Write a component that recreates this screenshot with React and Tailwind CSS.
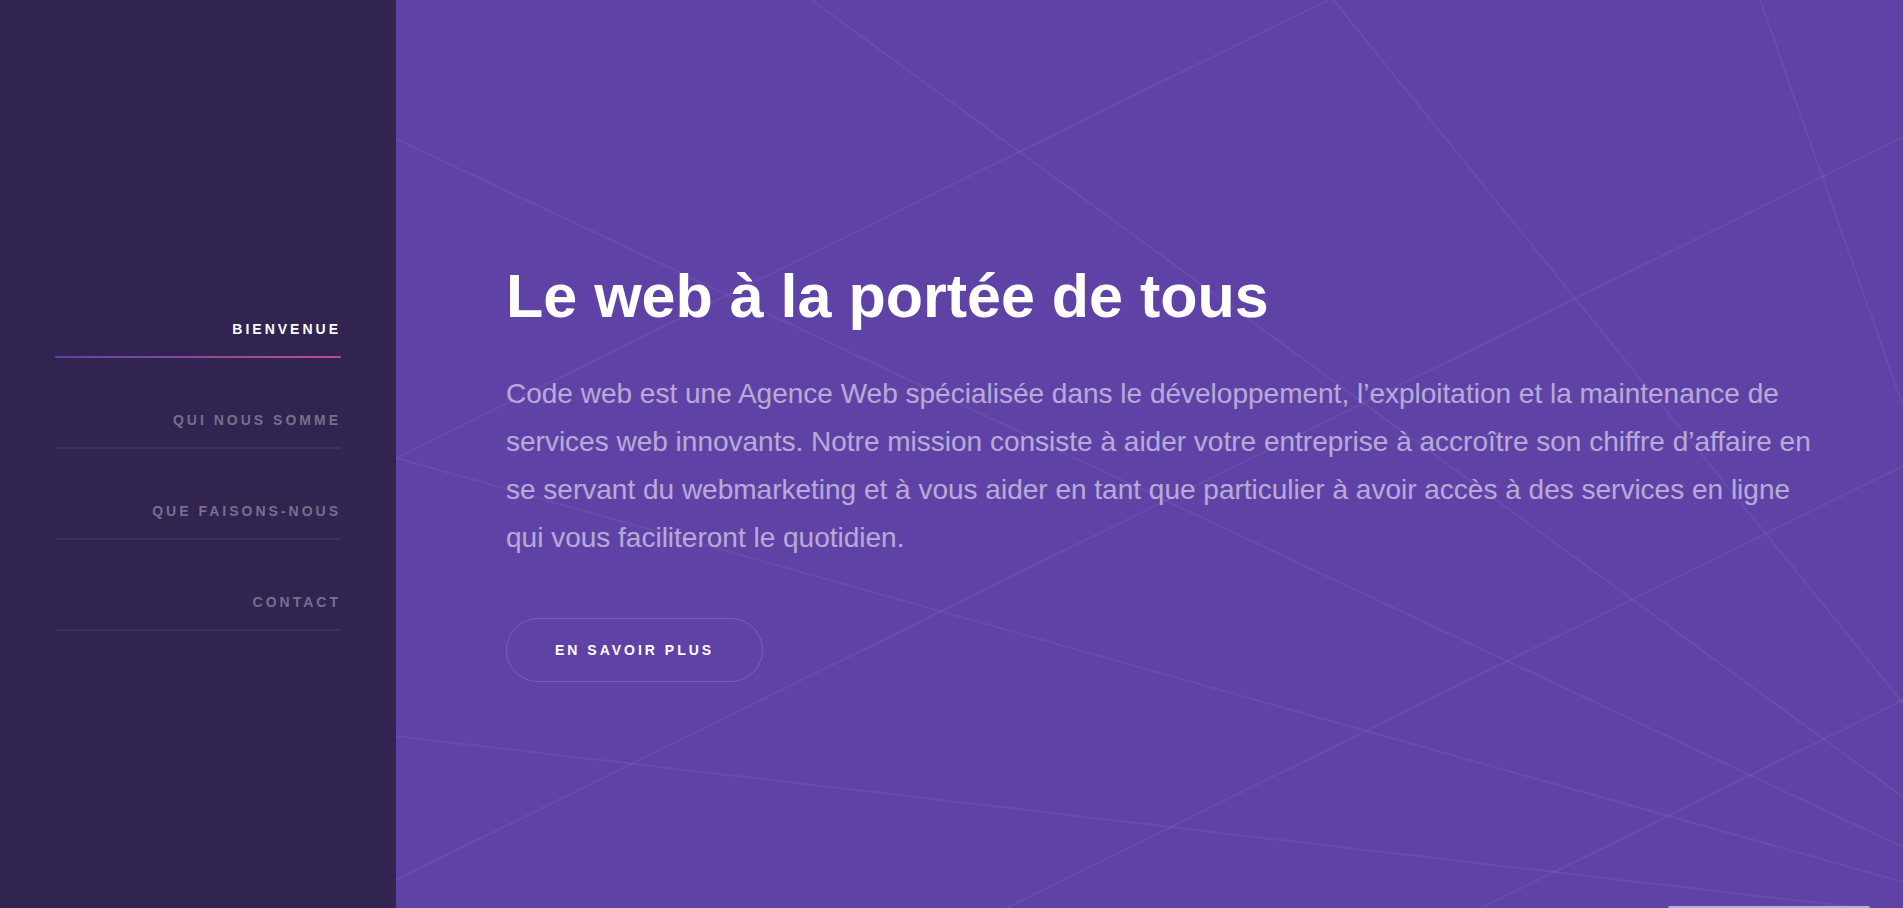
const navItems = [
  { id: "intro", label: "Bienvenue", active: true },
  { id: "one", label: "Qui nous somme" },
  { id: "two", label: "Que faisons-nous" },
  { id: "three", label: "Contact" },
];

const rays = [
  [0, 139, 1508, 847],
  [416, 0, 1508, 797],
  [938, 0, 1508, 703],
  [1365, 0, 1508, 406],
  [933, 0, 0, 458],
  [0, 880, 1508, 137],
  [611, 908, 1508, 466],
  [1086, 908, 1508, 700],
  [0, 458, 1508, 882],
  [0, 736, 1508, 913],
];

function Sidebar() {
  return (
    <aside className="flex w-[396px] shrink-0 flex-col justify-center bg-[#312450] px-[55px] pt-10">
      <nav>
        <ul className="flex flex-col gap-[50px]">
          {navItems.map((item) => (
            <li key={item.id}>
              <a
                href={`#${item.id}`}
                className={`block text-right text-[14px] leading-6 font-bold tracking-[3px] uppercase ${
                  item.active ? "text-white" : "text-white/35"
                }`}
              >
                {item.label}
                <span
                  className={`mt-[15px] block h-0.5 rounded-xs ${
                    item.active
                      ? "bg-linear-to-r from-[#5e42a6] to-[#b74e91]"
                      : "bg-[#3d2c66]"
                  }`}
                />
              </a>
            </li>
          ))}
        </ul>
      </nav>
    </aside>
  );
}

function Rays() {
  return (
    <svg
      aria-hidden="true"
      className="absolute inset-0 h-full w-full"
      viewBox="0 0 1508 908"
      preserveAspectRatio="none"
    >
      {rays.map(([x1, y1, x2, y2], i) => (
        <line
          key={i}
          x1={x1}
          y1={y1}
          x2={x2}
          y2={y2}
          stroke="#fff"
          strokeOpacity="0.06"
          strokeWidth="2"
        />
      ))}
    </svg>
  );
}

export default function App() {
  return (
    <div className="flex min-h-screen border-r border-[#d9d2ea] bg-[#5e42a6] font-['Liberation_Sans',Arial,sans-serif] text-white">
      <Sidebar />
      <main className="relative flex min-w-0 flex-1 flex-col justify-center overflow-hidden pt-6 pr-20 pl-[110px]">
        <Rays />
        <section id="intro" className="relative">
          <h1 className="mb-7 text-[61px] leading-[92px] font-bold">
            Le web à la portée de tous
          </h1>
          <p className="mb-14 text-[28px] leading-[48px] text-white/55">
            Code web est une Agence Web spécialisée dans le développement,
            l’exploitation et la maintenance de services web innovants. Notre
            mission consiste à aider votre entreprise à accroître son chiffre
            d’affaire en se servant du webmarketing et à vous aider en tant que
            particulier à avoir accès à des services en ligne qui vous
            faciliteront le quotidien.
          </p>
          <a
            href="#one"
            className="inline-flex h-16 items-center rounded-full border border-white/15 px-12 text-[14px] font-bold tracking-[3px] uppercase"
          >
            En savoir plus
          </a>
        </section>
      </main>
      <div className="fixed right-[34px] bottom-0 h-0.5 w-[202px] rounded-t-sm bg-[#b9addb]" />
    </div>
  );
}
